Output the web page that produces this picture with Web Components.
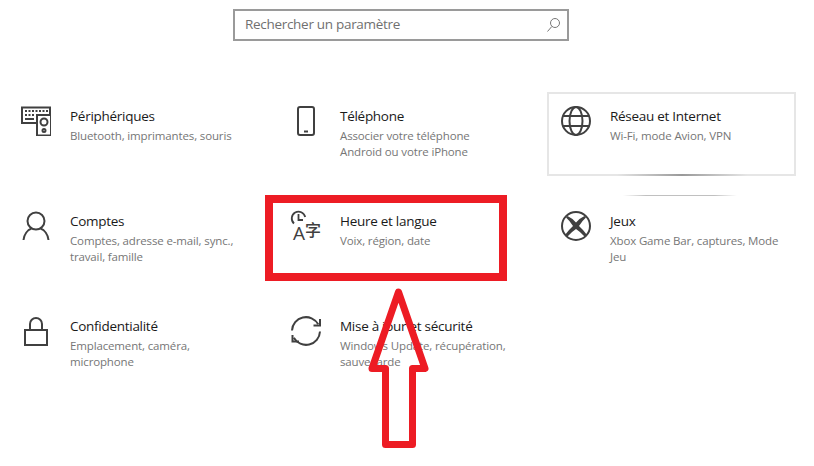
<!DOCTYPE html>
<html lang="fr">
<head>
<meta charset="utf-8">
<title>Paramètres</title>
<style>
    html, body { margin: 0; background: #fff; }
    body { width: 814px; height: 466px; overflow: hidden; position: relative; font-family: "Open Sans", "Liberation Sans", sans-serif; }
    settings-grid { margin: 51px 0 0 7px; }
</style>
</head>
<body>
<settings-search placeholder="Rechercher un paramètre"></settings-search>

<settings-grid>
    <settings-tile name="Périphériques" desc="Bluetooth, imprimantes, souris">
        <svg slot="icon" viewBox="1 1 30 30"><g fill="none" stroke="#404040" stroke-width="2"><path d="M16 18H2V2.500h28V9"/><rect x="17" y="10" width="14" height="20.500"/><circle cx="24" cy="17" r="3.500"/><circle cx="24" cy="25.500" r="1.500"/></g><path fill="#404040" d="M5 5h2v2H5zM8.500 5h2v2h-2zM12 5h2v2h-2zM15.500 5h2v2h-2zM19 5h2v2h-2zM22.500 5h2v2h-2zM26 5h2v2h-2zM5 9h2v2H5zM8.500 9h2v2h-2zM12 9h2v2h-2zM5 13h9v2H5z"/></svg>
    </settings-tile>
    <settings-tile name="Téléphone" desc="Associer votre téléphone&#10;Android ou votre iPhone">
        <svg slot="icon" viewBox="1 1 30 30"><rect x="8" y="2" width="16" height="28" rx="2" fill="none" stroke="#404040" stroke-width="2"/><path fill="#404040" d="M14 25.500h4v2h-4z"/></svg>
    </settings-tile>
    <settings-tile name="Réseau et Internet" desc="Wi-Fi, mode Avion, VPN" active>
        <svg slot="icon" viewBox="1 1 30 30"><g fill="none" stroke="#404040" stroke-width="2"><circle cx="16" cy="16" r="14"/><ellipse cx="16" cy="16" rx="6.500" ry="14"/><path d="M3 11h26M3 21h26"/></g></svg>
    </settings-tile>
    <settings-tile name="Comptes" desc="Comptes, adresse e-mail, sync.,&#10;travail, famille">
        <svg slot="icon" viewBox="1 1 30 30"><g fill="none" stroke="#404040" stroke-width="2"><circle cx="16" cy="11" r="8.500"/><path d="M3.500 30C4 24.500 7.500 20 11.500 18.500M28.500 30C28 24.500 24.500 20 20.500 18.500"/></g></svg>
    </settings-tile>
    <settings-tile name="Heure et langue" desc="Voix, région, date">
        <svg slot="icon" viewBox="0 0 30 30" overflow="visible"><g fill="none" stroke="#404040" stroke-width="1.800"><path d="M3 12.500A6.800 6.800 0 1 1 14.200 6"/><path d="M7.500 3v6h4.500"/></g><text x="2" y="29" font-family="Open Sans, sans-serif" font-size="19" fill="#404040">A</text><text x="14" y="25" font-family="Noto Sans CJK SC, sans-serif" font-size="16" font-weight="500" fill="#404040">字</text></svg>
    </settings-tile>
    <settings-tile name="Jeux" desc="Xbox Game Bar, captures, Mode&#10;Jeu">
        <svg slot="icon" viewBox="1 1 30 30"><circle cx="16" cy="16" r="14" fill="none" stroke="#404040" stroke-width="2"/><path fill="#404040" d="M7.500 6Q12 8 16 12.500Q20 8 24.500 6L26 7.500Q22 11 19 16Q23.500 20 27 25L25 27Q20 21.500 16 19Q12 21.500 7 27L5 25Q8.500 20 13 16Q10 11 6 7.500Z"/></svg>
    </settings-tile>
    <settings-tile name="Confidentialité" desc="Emplacement, caméra,&#10;microphone">
        <svg slot="icon" viewBox="1 1 30 30"><g fill="none" stroke="#404040" stroke-width="2"><rect x="5" y="15" width="22" height="15"/><path d="M10 15V9a6 6 0 0 1 12 0v6"/></g></svg>
    </settings-tile>
    <settings-tile name="Mise à jour et sécurité" desc="Windows Update, récupération,&#10;sauvegarde">
        <svg slot="icon" viewBox="1 1 30 30"><g fill="none" stroke="#404040" stroke-width="2"><path d="M2 15.500A14 14 0 0 1 28.200 9.300"/><path d="M30 16.500A14 14 0 0 1 3.800 22.700"/><path d="M30 4v6.500h-6.500M2.500 20v6.500H9"/></g></svg>
    </settings-tile>
</settings-grid>

<red-callout></red-callout>

<script>
class SettingsSearch extends HTMLElement {
    connectedCallback() {
        this.attachShadow({ mode: 'open' });
        this.shadowRoot.innerHTML = `
            <style>
                :host { display: flex; align-items: center; justify-content: space-between; box-sizing: border-box;
                    width: 336px; height: 32px; margin: 9px 0 0 233px; padding: 0 7px 0 10px;
                    border: 2px solid #9a9a9a; background: #fff; }
                span { font-size: 13.500px; letter-spacing: -0.3px; color: #707070; margin-bottom: 2px; }
                svg { width: 13px; height: 14px; display: block; }
            </style>
            <span>${this.getAttribute('placeholder')}</span>
            <svg viewBox="0 0 13 14" fill="none" stroke="#777"><circle cx="8" cy="5" r="4.500"/><path d="M4.800 8.500L.5 13.500"/></svg>
        `;
    }
}

class SettingsGrid extends HTMLElement {
    connectedCallback() {
        this.attachShadow({ mode: 'open' });
        this.shadowRoot.innerHTML = `
            <style>
                :host { display: grid; grid-template-columns: repeat(3, 249px); grid-auto-rows: 84px; column-gap: 21px; row-gap: 21px; }
            </style>
            <slot></slot>
        `;
    }
}

class SettingsTile extends HTMLElement {
    connectedCallback() {
        this.attachShadow({ mode: 'open' });
        this.shadowRoot.innerHTML = `
            <style>
                :host { display: flex; box-sizing: border-box; padding: 12px 8px 0 12px; gap: 19px; position: relative; border: 2px solid transparent; }
                :host([active]) { border-color: #e6e6e6; }
                :host([active])::after { content: ""; position: absolute; left: 68px; right: 47px; bottom: -2px; height: 2px;
                    background: linear-gradient(90deg, #e6e6e6, #999 50%, #e6e6e6); }
                :host([active])::before { content: ""; position: absolute; left: 74px; right: 57px; bottom: -22px; height: 1px;
                    background: linear-gradient(90deg, #fff, #c0c0c0 20%, #c0c0c0 80%, #fff); }
                .icon { flex: none; width: 30px; height: 30px; }
                ::slotted(svg) { display: block; width: 30px; height: 30px; }
                .name { font-size: 13.500px; letter-spacing: -0.28px; line-height: 20px; color: #1a1a1a; }
                .desc { font-size: 11.500px; letter-spacing: -0.14px; line-height: 16px; color: #767676; margin-top: 2px; white-space: pre-line; }
            </style>
            <div class="icon"><slot name="icon"></slot></div>
            <div>
                <div class="name">${this.getAttribute('name')}</div>
                <div class="desc">${this.getAttribute('desc')}</div>
            </div>
        `;
    }
}

// Red rectangle and arrow drawn over the tiles
class RedCallout extends HTMLElement {
    connectedCallback() {
        this.attachShadow({ mode: 'open' });
        this.shadowRoot.innerHTML = `
            <style>
                :host { display: block; position: absolute; inset: 0; pointer-events: none; }
                svg { display: block; }
            </style>
            <svg width="814" height="466" fill="none" stroke="#ed1c24" stroke-width="8">
                <rect x="269" y="199" width="234" height="78"/>
                <path stroke-width="7" stroke-linejoin="round" d="M398.500 292L425 368.500H412.500V444.500H385.500V368.500H372z"/>
            </svg>
        `;
    }
}

customElements.define('settings-search', SettingsSearch);
customElements.define('settings-grid', SettingsGrid);
customElements.define('settings-tile', SettingsTile);
customElements.define('red-callout', RedCallout);
</script>
</body>
</html>
